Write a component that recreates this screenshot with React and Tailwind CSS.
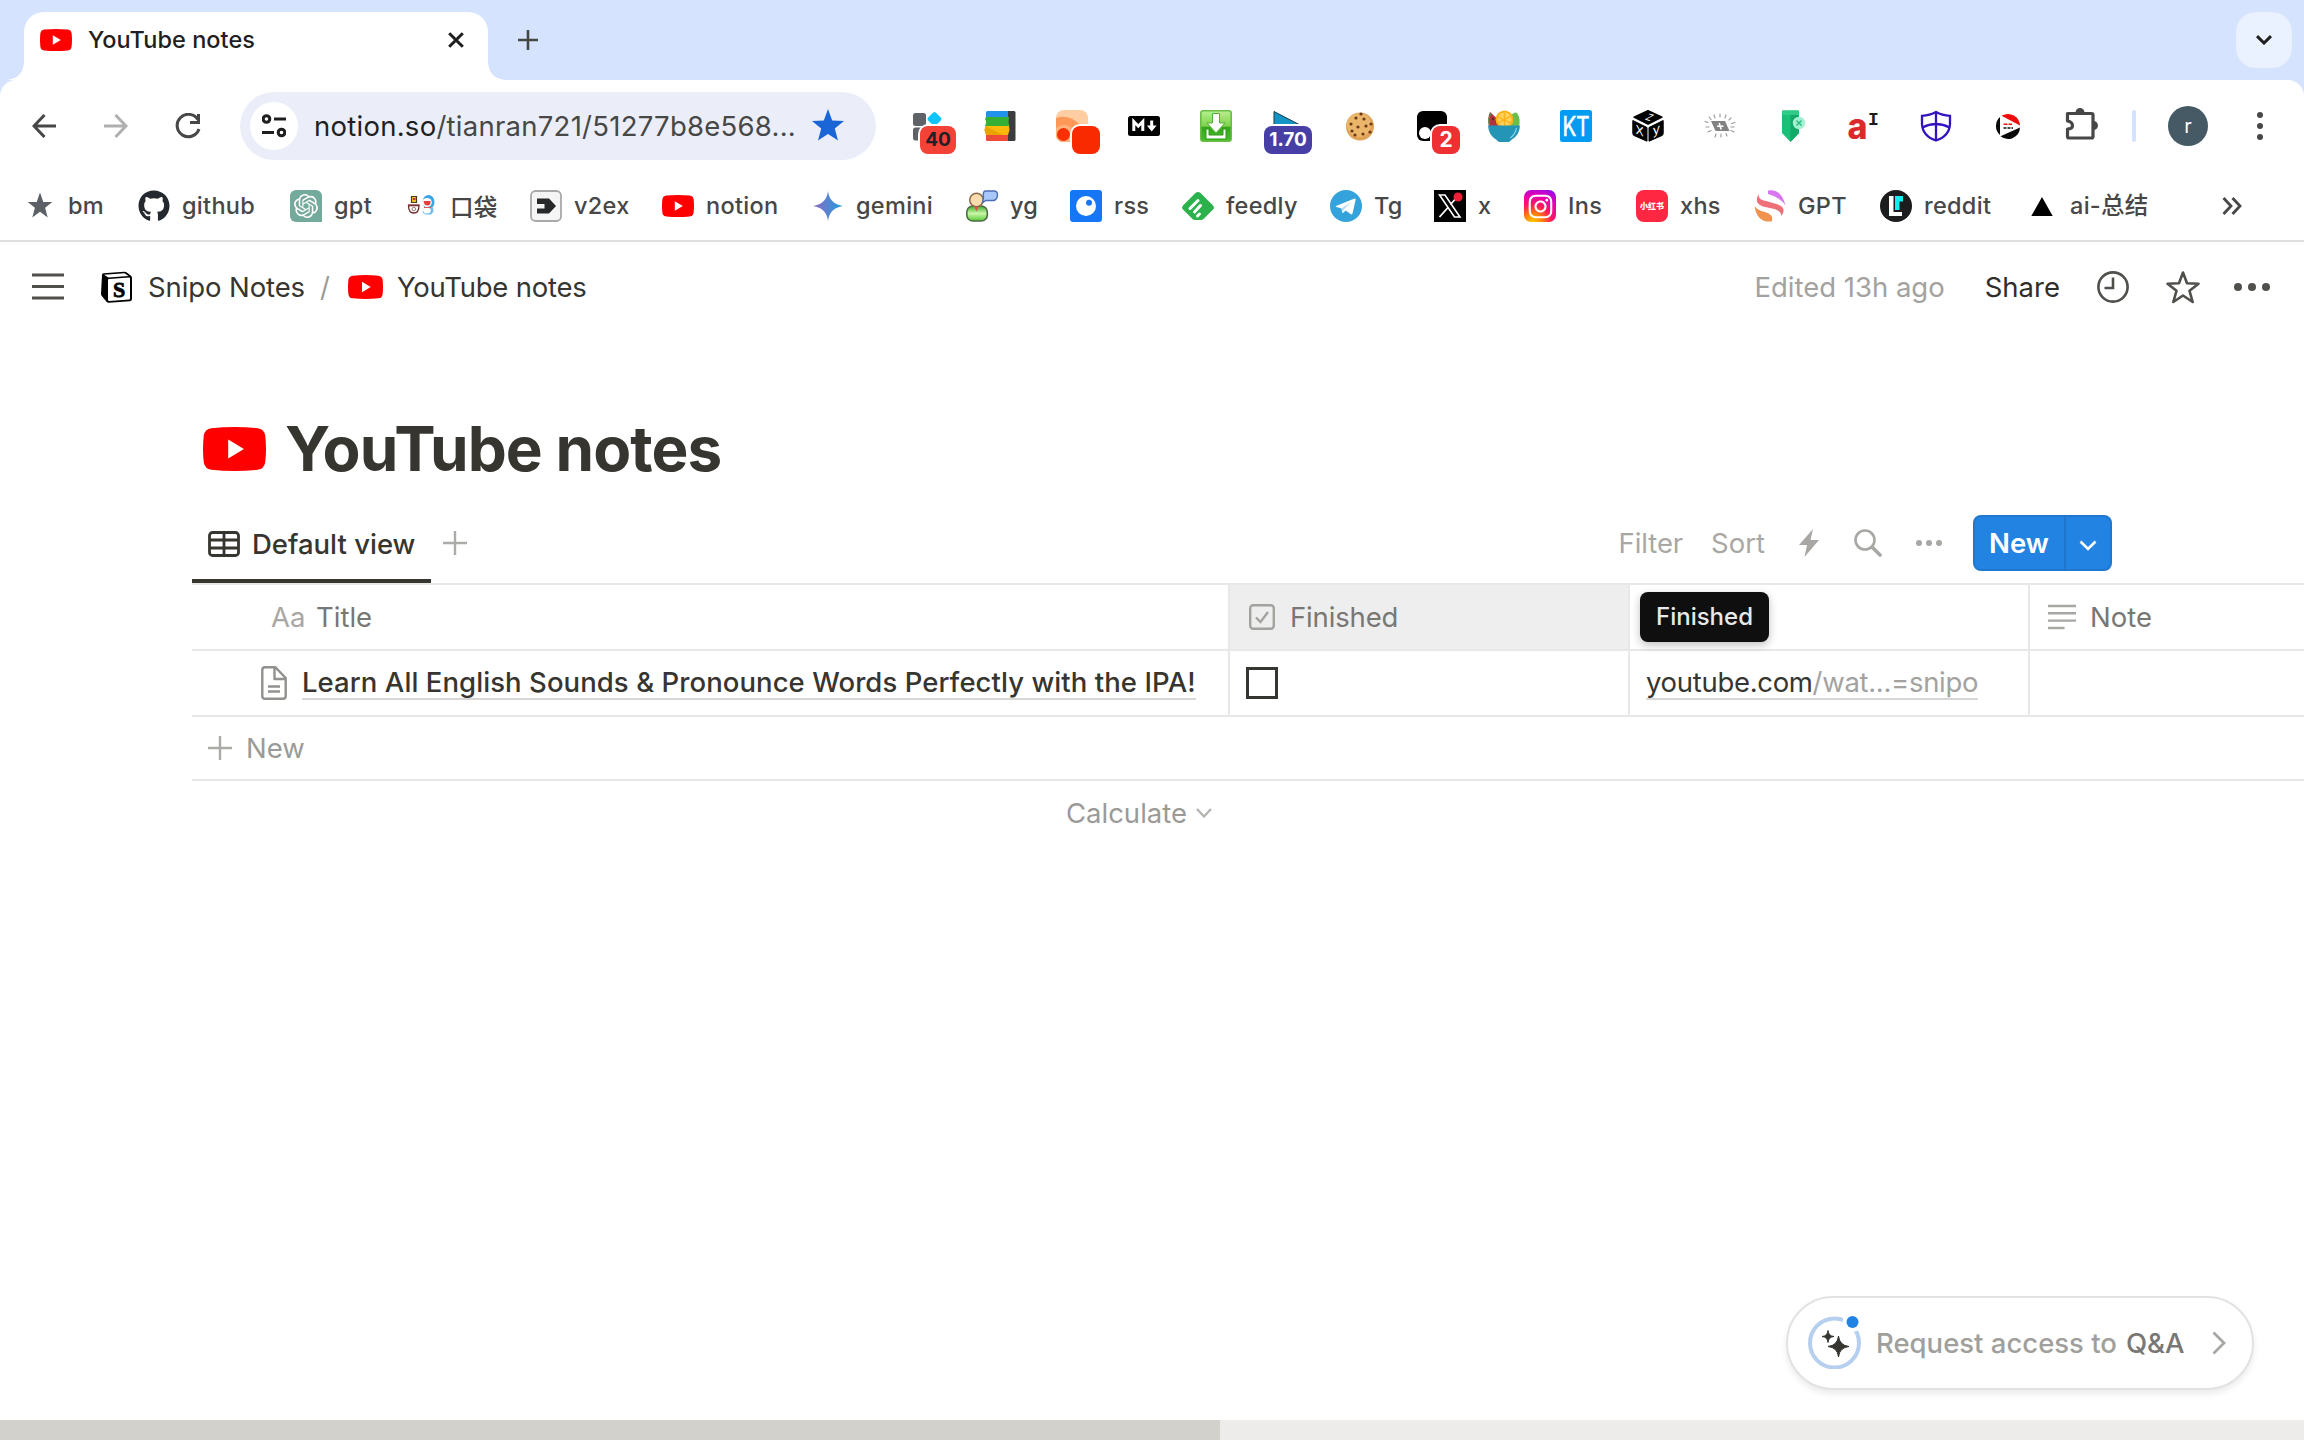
import { FaGithub, FaInstagram } from "react-icons/fa";
import { SiOpenai } from "react-icons/si";

function YouTubeIcon({ className }) {
  return (
    <svg viewBox="0 0 32 22" className={className} preserveAspectRatio="none">
      <path d="M4.200 .6Q16-.6 27.800.6Q31 1 31.600 4.200Q32.400 11 31.600 17.800Q31 21 27.800 21.400Q16 22.600 4.200 21.400Q1 21 .4 17.800Q-.4 11 .4 4.200Q1 1 4.200 .6Z" fill="#f00" />
      <path d="M12.800 6.300V15.700L20.800 11Z" fill="#fff" />
    </svg>
  );
}

/* Toolbar extensions */

function Badge({ className, children }) {
  return (
    <span className={`absolute top-4 flex h-[28px] items-center justify-center rounded-[8px] text-[19px] font-bold ring-2 ring-white ${className}`}>
      {children}
    </span>
  );
}

const S = ({ children, className = "size-8" }) => (
  <svg viewBox="0 0 32 32" className={`${className} shrink-0 overflow-visible`}>{children}</svg>
);

const extensions = [
  <>
    <S>
      <rect x="1" y="3" width="13" height="13" rx="2.500" fill="#5f6368" />
      <rect x="1" y="17.500" width="13" height="13" rx="2.500" fill="#5f6368" />
      <rect x="17" y="3.500" width="11" height="11" rx="2" transform="rotate(45 22.500 9)" fill="#0fc5fb" />
    </S>
    <Badge className="left-2 w-9 bg-[#f44236] text-[#202124]">40</Badge>
  </>,
  <S>
    <path d="M20 1h10q1.500 0 1.500 1.500v27q0 1.500-1.500 1.500H20z" fill="#3c3c3f" />
    <path d="M3 1H24V9H2V2Z" fill="#2093ec" />
    <path d="M2 7H25L24.500 12L25.500 16H1Q3 12 1 9Z" fill="#34b034" />
    <path d="M1.500 16H25L25.500 20L24 25H2L.5 20Z" fill="#fbb90c" />
    <path d="M1.500 16L19 25H2L.5 20Z" fill="#e9a300" />
    <path d="M2 25H24V31H3Q2 31 2 30Z" fill="#f04a38" />
  </S>,
  <>
    <S>
      <rect width="32" height="32" rx="8" fill="#fecda2" />
      <path d="M0 8Q12 4 22 13L28 19V28L14 32H8Q0 32 0 24Z" fill="#fe9858" />
      <path d="M0 18Q12 10 20 24L14 32H8Q0 32 0 24Z" fill="#ffb37e" />
      <circle cx="7.500" cy="24.500" r="6.500" fill="#fb3005" />
    </S>
    <Badge className="left-4 w-7 bg-[#f92a00]" />
  </>,
  <S>
    <rect y="6" width="32" height="20" rx="2.500" fill="#000" />
    <path d="M5.800 21V11.500L10.300 16.200L14.800 11.500V21" fill="none" stroke="#fff" strokeWidth="3" />
    <path d="M22.200 10.500h3v5h3.400L23.700 21.500L18.900 15.500h3.300z" fill="#fff" />
  </S>,
  <S>
    <defs><linearGradient id="dl" x2="0" y2="1"><stop stopColor="#b7ef90" /><stop offset=".5" stopColor="#7fd24b" /><stop offset=".55" stopColor="#35a51c" /><stop offset="1" stopColor="#49bd2e" /></linearGradient></defs>
    <rect x=".8" y=".8" width="30.400" height="30.400" rx="2.500" fill="url(#dl)" stroke="#6bbd4a" strokeWidth="1.600" />
    <path d="M12.500 3.500H19.500V13H25L16 23L7 13H12.500Z" fill="#fff" stroke="#55b136" />
    <path d="M6 19V29H26V19H23V25H9V19Z" fill="#fff" stroke="#2c9a16" />
  </S>,
  <>
    <S>
      <path d="M2 1.500L30 16L2 30Z" fill="#1494c4" stroke="#153c4c" />
    </S>
    <Badge className="-left-2 w-12 bg-[#473fa6] text-white">1.70</Badge>
  </>,
  <S>
    <circle cx="16" cy="16.500" r="14" fill="#e0a256" />
    <circle cx="15" cy="15" r="12" fill="#efbb72" opacity=".75" />
    {[[12, 8], [20, 9], [7, 14], [14, 17], [22, 16], [27, 14], [11, 25], [19, 24], [8, 21], [26, 22], [17, 4]].map(([x, y]) => (
      <circle key={`${x}-${y}`} cx={x} cy={y} r="1.600" fill="#6a3a1b" />
    ))}
  </S>,
  <>
    <S>
      <rect x="1" y="1" width="30" height="30" rx="6" fill="#000" />
      <circle cx="9" cy="23" r="6" fill="#fff" />
      <circle cx="21" cy="23" r="6" fill="#fff" />
    </S>
    <Badge className="left-4 w-7 bg-[#ee3033] text-[21px] text-white">2</Badge>
  </>,
  <S>
    <path d="M2 2L14 13L10 17H1Q-1 8 2 2Z" fill="#b33341" />
    <path d="M3.500 3Q-.5 8 1.500 15" fill="none" stroke="#4f9a4d" strokeWidth="1.200" />
    <circle cx="5" cy="9" r="1" fill="#5c1720" /><circle cx="8.500" cy="12" r="1" fill="#5c1720" />
    <path d="M22 6Q27 1 29 3Q33 9 31 16H22Z" fill="#6abf4b" />
    <circle cx="16.500" cy="9.500" r="9" fill="#fcb116" />
    <circle cx="16.500" cy="9.500" r="7" fill="#ffd15a" />
    <path d="M16.500 3V16M10 7L23 13M23 6L10 13" stroke="#fcb116" strokeWidth="1.300" />
    <path d="M0 15.500H32Q31.500 25 24 29.500L21 32H11L8 29.500Q.5 25 0 15.500Z" fill="#2495b7" />
    <path d="M28.500 18Q27 25 22 28" stroke="#7fd0e6" strokeWidth="1.200" fill="none" />
  </S>,
  <S>
    <rect width="32" height="32" rx="2.500" fill="#049bf2" />
    <text x="2.500" y="26" fontSize="27" fill="#fff" textLength="27" lengthAdjust="spacingAndGlyphs" fontFamily="Inter, sans-serif" stroke="#fff" strokeWidth=".6">KT</text>
  </S>,
  <S>
    <path d="M16 .8L30 7.200L16 14.200L2 7.200Z" fill="#000" stroke="#000" strokeWidth="1.500" strokeLinejoin="round" />
    <path d="M.8 10.500L15 17.500V31.200L2 25.500Q.8 25 .8 23.500Z" fill="#000" stroke="#000" strokeLinejoin="round" />
    <path d="M31.200 10.500L17 17.500V31.200L30 25.500Q31.200 25 31.200 23.500Z" fill="#000" stroke="#000" strokeLinejoin="round" />
    <g fill="#fff" fontFamily="Inter, sans-serif" textAnchor="middle">
      <text fontSize="9.500" transform="translate(15.500 10.200) rotate(15) skewX(-20)">Z</text>
      <text fontSize="12" transform="translate(7.500 25) skewY(22)">X</text>
      <text fontSize="13" transform="translate(24.500 24) skewY(-22)">y</text>
    </g>
  </S>,
  <S>
    <path d="M7 11H21L25.500 21H11.500Z" fill="#828282" />
    <path d="M13 16.200h6.500M15.200 13l2 6.500" stroke="#fff" strokeWidth="1.600" />
    <g stroke="#999" strokeWidth="1.100" strokeLinecap="round">
      <path d="M10 5L11 8M16 4V7M22 5L21 8M5 7L7 9.500M27 8L25 10M1 11.500L4 12.500M31 12.500L27.500 13.500M2 17H5M27 17H30M4 22L7 20.500M30 22L27 20.500M11 27L12 24M17 27V24M23 26L22 23.500" />
    </g>
  </S>,
  <S>
    <path d="M6 1.500Q6 .5 7 .5H22Q23 .5 23 1.500V23L14.500 32L6 23Z" fill="#1abf78" />
    <path d="M14.500 1H22Q23 .5 23 1.500V23L14.500 32Z" fill="#10a968" />
    <path d="M6 1.500Q6 .5 7 .5H22Q23 .5 23 1.500V5H6Z" fill="#2ecc87" />
    <circle cx="23" cy="13" r="6.200" fill="#a5efd1" />
    <path d="M20.500 10.500L25.500 15.500M25.500 10.500L20.500 15.500" stroke="#24b87b" strokeWidth="1.300" />
  </S>,
  <S>
    <text x="-.5" y="29" fontSize="36" fontWeight="800" fill="#da2a2b" fontFamily="Inter, sans-serif" textLength="20" lengthAdjust="spacingAndGlyphs">a</text>
    <text x="20" y="14.500" fontSize="18" fontWeight="700" fill="#1b1b1b" fontFamily="Liberation Mono, monospace">I</text>
  </S>,
  <S>
    <path d="M16 2Q10 5.500 2 5.800V14Q2.500 26 16 30.500Q29.500 26 30 14V5.800Q22 5.500 16 2Z" fill="none" stroke="#3412c0" strokeWidth="2.300" />
    <path d="M16 2V30M2.500 17.500Q9 14 16 14T29.500 17.500" fill="none" stroke="#3412c0" strokeWidth="2.300" />
  </S>,
  <S>
    <circle cx="16" cy="16" r="12" fill="#fff" />
    <path d="M10 5.500A12 12 0 0 1 28 15.500L10 6Z" fill="#ee0c0c" />
    <path d="M8 7A12 12 0 0 0 8 25ZM8.500 26.300L28 17.500A12 12 0 0 1 8.500 26.300Z" fill="#0a0a0a" />
    <path d="M11.500 14.200H20" stroke="#e11" strokeWidth="1.600" strokeDasharray="4 1" />
    <path d="M11.500 18H21" stroke="#111" strokeWidth="1.600" strokeDasharray="3 1" />
  </S>,
];

/* Bookmark icons */

const bookmarks = [
  { w: "w-[114px]", t: "bm", icon: <S><path d="M16 2.500L19.300 12H28.300L21.100 17.700L23.700 27.500L16 21.700L8.300 27.500L10.900 17.700L3.700 12H12.700Z" fill="#5b6066" /></S> },
  { w: "w-[152px]", t: "github", icon: <FaGithub className="size-8 shrink-0 text-[#24292f]" /> },
  { w: "w-[116px]", t: "gpt", icon: <span className="flex size-8 shrink-0 items-center justify-center rounded-[6px] rounded-br-none bg-[#74aa9c] text-white"><SiOpenai className="size-6" /></span> },
  {
    w: "w-[124px]", t: "口袋", cls: "font-['Noto_Sans_CJK_SC']",
    icon: (
      <S>
        <g transform="translate(1 0)">
          <path d="M4.500 6.500h5v6h-5z" fill="#f3c41c" stroke="#4a3a12" strokeWidth="1.200" /><path d="M6 8h2.500v2H6z" fill="#c33" />
          <path d="M1.500 15.500h10.500q0 7.500-5.200 7.500t-5.300-7.500z" fill="#fff" stroke="#6a2626" strokeWidth="1.300" /><path d="M1 15h11.500" stroke="#8c3b3b" strokeWidth="1.200" /><circle cx="6.800" cy="19" r="1.800" fill="none" stroke="#977" />
          <ellipse cx="21.500" cy="12" rx="6" ry="7" fill="#3aa6e6" /><ellipse cx="20" cy="12.500" rx="4.800" ry="4.500" fill="#fff" /><path d="M16.500 11h7q.5 4.500-3 4.500t-4-4.500z" fill="#e2413c" />
          <path d="M17.500 17.500h8.500l.5 4-2.500 3h-5.500l-3-2z" fill="#6cbdee" /><ellipse cx="20" cy="20.500" rx="3.800" ry="3" fill="#fff" /><path d="M17 17.500h7" stroke="#d55" />
        </g>
      </S>
    ),
  },
  { w: "w-[132px]", t: "v2ex", icon: <S><rect x="1" y="1" width="30" height="30" rx="4.500" fill="#f5f5f5" stroke="#a9a9a9" strokeWidth="1.800" /><path d="M7 8.500H19L26 16L19 23.500H7V18.500H14.500V14H7Z" fill="#26282a" /></S> },
  { w: "w-[150px]", t: "notion", icon: <YouTubeIcon className="h-[22px] w-8 shrink-0" /> },
  {
    w: "w-[154px]", t: "gemini",
    icon: <S><defs><linearGradient id="gem" x2="1"><stop stopColor="#9168c0" /><stop offset=".5" stopColor="#5684d1" /><stop offset="1" stopColor="#1ba1e3" /></linearGradient></defs><path d="M16 1Q17.500 14 31 16Q17.500 18 16 31Q14.500 18 1 16Q14.500 14 16 1Z" fill="url(#gem)" /></S>,
  },
  {
    w: "w-[104px]", t: "yg",
    icon: (
      <S>
        <defs><linearGradient id="yg" x2="0" y2="1"><stop stopColor="#3faa28" /><stop offset=".5" stopColor="#c9f7a8" /><stop offset="1" stopColor="#55c935" /></linearGradient></defs>
        <rect x=".8" y="16" width="20.500" height="15" rx="6" fill="url(#yg)" stroke="#4a6b46" strokeWidth="1.600" />
        <circle cx="10.500" cy="10" r="6.800" fill="#fbdcae" stroke="#8c6a45" strokeWidth="1.500" />
        <path d="M8.500 17h4l-2 4.500z" fill="#e2504a" />
        <path d="M19.500 1h8.500q3.500 0 3.500 4T28 10.500H20L16.500 12.500L17.500 8Q16.500 1 19.500 1z" fill="#a8c8fa" stroke="#4d6cb8" strokeWidth="1.400" />
      </S>
    ),
  },
  { w: "w-[112px]", t: "rss", icon: <S><rect width="32" height="32" rx="3" fill="#1677f6" /><circle cx="16" cy="16" r="10" fill="#fff" /><circle cx="19" cy="12.800" r="3" fill="#1677f6" /></S> },
  {
    w: "w-[148px]", t: "feedly",
    icon: <S><path d="M13.500 3Q16 .8 18.500 3L31 15.500Q32.800 17.500 31 19.500L22 28.500Q20.500 30 18.500 30H13.500Q11.500 30 10 28.500L1 19.500Q-.8 17.500 1 15.500Z" fill="#2bb24c" /><path d="M8 18.500L16 10.500M12.500 22L18.500 15.500M15.500 26L17.500 24" stroke="#fff" strokeWidth="3" strokeLinecap="round" /></S>,
  },
  { w: "w-[104px]", t: "Tg", icon: <S><circle cx="16" cy="16" r="16" fill="#34a3dc" /><path d="M6 16L24.500 8.500Q26 8 25.600 10L22.500 23.500Q22 25 20.500 24L15.700 20.500L13.300 22.800Q12.500 23.500 12.300 22.500L11.500 18.500L6.500 17Q5 16.500 6 16Z" fill="#fff" /><path d="M11.800 18.300L21.500 12L14 19.300L12.800 22Z" fill="#b5d8ee" /></S> },
  { w: "w-[90px]", t: "x", icon: <S><path d="M0 0H32V32H0Z" fill="#000" /><path d="M5.500 5H11L26 27H20.500Z" fill="none" stroke="#fff" strokeWidth="1.600" /><path d="M25 5L16.500 14.500M14 17.500L5.500 27" stroke="#fff" strokeWidth="1.800" /><circle cx="24" cy="7" r="4.500" fill="#ee1f37" /></S> },
  {
    w: "w-[112px]", t: "Ins",
    icon: <span className="flex size-8 shrink-0 items-center justify-center rounded-[7px] bg-[radial-gradient(circle_at_28%_105%,#ffd400_0%,#ff8a00_22%,#ff1a5c_46%,#e400b4_70%,#7a10ff_100%)] text-white"><FaInstagram className="size-[27px]" /></span>,
  },
  { w: "w-[118px]", t: "xhs", icon: <span className="flex size-8 shrink-0 items-center justify-center rounded-[8px] bg-[#ff2741] font-['Noto_Sans_CJK_SC'] text-[8px] font-black text-white">小红书</span> },
  {
    w: "w-[126px]", t: "GPT",
    icon: <S><path d="M14 .5Q27-2 31.500 15.500Q26 7 14 4Z" fill="#d877f0" /><path d="M5 3.500Q3 9 12 11L24 14.500Q33 18 27.500 26Q27 20 18 18.500L9 16.500Q-1 13 5 3.500Z" fill="#ee7079" /><path d="M.5 16Q3 20 11 22Q20 24.500 18 31.500Q3 33 .5 16Z" fill="#f09350" /></S>,
  },
  { w: "w-[146px]", t: "reddit", icon: <S><circle cx="16" cy="16" r="16" fill="#1c1c1e" /><path d="M9 6H13.500V22H22V26H9Z" fill="#fff" /><path d="M15 6H23V11.500H19.500V20H15Z" fill="#0ff0f0" /></S> },
  { w: "w-[196px]", t: "ai-总结", cls: "font-[Inter,'Noto_Sans_CJK_SC']", icon: <S><path d="M16 7L26.700 26H5.300Z" fill="#000" /></S> },
];

function TabStrip() {
  return (
    <div className="flex h-20 items-start bg-[#d5e3fe] pt-3">
      <svg viewBox="0 0 20 20" className="mt-12 ml-1 size-5"><path d="M0 20Q20 20 20 0V20Z" fill="#fff" /></svg>
      <div className="flex h-[68px] w-[464px] items-start rounded-t-[20px] bg-white pl-4">
        <YouTubeIcon className="mt-[17px] h-[22px] w-8" />
        <span className="mt-[10px] ml-[16px] w-[360px] text-[23.500px] leading-[36px] font-medium tracking-[0.05px] text-[#1f1f1f]">YouTube notes</span>
        <svg viewBox="0 0 16 16" className="mt-5 size-4"><path d="M1.200 1.200L14.800 14.800M14.800 1.200L1.200 14.800" stroke="#1f1f1f" strokeWidth="3" /></svg>
      </div>
      <svg viewBox="0 0 20 20" className="mt-12 size-5"><path d="M20 20Q0 20 0 0V20Z" fill="#fff" /></svg>
      <svg viewBox="0 0 20 20" className="mt-[18px] ml-[10px] size-5"><path d="M10 0V20M0 10H20" stroke="#474747" strokeWidth="2.600" /></svg>
      <div className="mr-3 ml-auto flex size-14 items-center justify-center rounded-[20px] bg-[#eaf1ff]">
        <svg viewBox="0 0 16 10" className="h-[10px] w-4"><path d="M1 1.200L8 8L15 1.200" fill="none" stroke="#1f1f1f" strokeWidth="3" /></svg>
      </div>
    </div>
  );
}

function Toolbar() {
  return (
    <div className="bg-[#d5e3fe]">
      <div className="flex h-[92px] items-center rounded-t-[16px] bg-white pl-8">
        <svg viewBox="0 0 24 24" className="size-6"><path d="M12.500 1L2 12L12.500 23M2 12H24" fill="none" stroke="#474747" strokeWidth="3" /></svg>
        <svg viewBox="0 0 24 24" className="ml-12 size-6"><path d="M11.500 1L22 12L11.500 23M22 12H0" fill="none" stroke="#b0b0b0" strokeWidth="3" /></svg>
        <svg viewBox="0 0 26 26" className="ml-[47px] size-[26px]"><path d="M22.800 6.500A11.200 11.200 0 1 0 24 16" fill="none" stroke="#474747" strokeWidth="3" /><path d="M23.500 1V9.500H15" fill="none" stroke="#474747" strokeWidth="3" /></svg>
        <div className="ml-[39px] flex h-[68px] w-[636px] items-center rounded-full bg-[#ebeef8] pl-[10px]">
          <div className="flex size-12 items-center justify-center rounded-full bg-white">
            <svg viewBox="0 0 24 24" className="size-6" fill="none" stroke="#1f1f1f" strokeWidth="3"><circle cx="4.500" cy="5" r="3.300" /><path d="M12 5H24M0 18.500H12" /><circle cx="19.500" cy="18.500" r="3.300" /></svg>
          </div>
          <span className="mt-[2px] ml-4 w-[498px] text-[27.500px] tracking-[0.26px] whitespace-nowrap text-[#474747]"><span className="text-[#1f1f1f]">notion.so</span><span>/tianran721/51277b8e568...</span></span>
          <svg viewBox="0 0 32 32" className="mt-[-2px] size-8"><path d="M16 0L20.200 11.500L32 12L22.800 19.500L26 31.500L16 25L6 31.500L9.200 19.500L0 12L11.800 11.500Z" fill="#1a66d6" /></svg>
        </div>
        <div className="ml-9 flex gap-10">
          {extensions.map((e, i) => <div key={i} className="relative size-8">{e}</div>)}
          <svg viewBox="0 0 34 34" className="mt-[-3px] size-[34px] overflow-visible" fill="none"><path d="M3.500 6.500H27.500Q29 6.500 29 8V29.500Q29 31 27.500 31H5Q3.500 31 3.500 29.500V22Q8.500 22 8.500 18.500T3.500 14Z" stroke="#474747" strokeWidth="3.200" strokeLinejoin="round" /><path d="M11.500 6V5.500a4.500 4.500 0 0 1 9 0V6zM29.500 14a4.500 4.500 0 0 1 0 9z" fill="#474747" /></svg>
        </div>
        <div className="ml-[34px] h-8 w-1 rounded-sm bg-[#d3e2fd]" />
        <div className="ml-8 flex size-10 items-center justify-center rounded-full bg-[#455a64] text-[20px] text-white">r</div>
        <svg viewBox="0 0 6 28" className="ml-[49px] h-7 w-[6px]" fill="#474747"><circle cx="3" cy="3" r="3" /><circle cx="3" cy="14" r="3" /><circle cx="3" cy="25" r="3" /></svg>
      </div>
    </div>
  );
}

function BookmarkBar() {
  return (
    <div className="flex h-[70px] items-start border-b-2 border-[#dfdfe0] pt-[18px] pl-6">
      {bookmarks.map((b) => (
        <div key={b.t} className={`flex h-8 shrink-0 items-center gap-3 ${b.w}`}>
          {b.icon}
          <span className={`text-[23.500px] leading-8 font-medium tracking-[0.3px] whitespace-nowrap text-[#474747] ${b.cls || ""}`}>{b.t}</span>
        </div>
      ))}
      <svg viewBox="0 0 20 18" className="mt-[7px] h-[18px] w-5"><path d="M1.500 1L9 9L1.500 17M10.500 1L18 9L10.500 17" fill="none" stroke="#474747" strokeWidth="2.800" /></svg>
    </div>
  );
}

function PageHeader() {
  return (
    <div className="flex h-[90px] items-center pl-8">
      <svg viewBox="0 0 32 28" className="size-8" stroke="#504f4b" strokeWidth="3"><path d="M0 2H32M0 13.500H32M0 25H32" /></svg>
      <svg viewBox="0 0 32 32" className="ml-9 size-8 overflow-visible">
        <path d="M2 4Q2 2.500 3.500 2.300L24 .8Q25.500.6 26.800 1.600L31 4.800Q32 5.500 32 7V28Q32 30 30 30.200L9 31.800Q7.500 32 6.500 30.800L1.800 25Q1 24 1 22.500Z" fill="#000" />
        <path d="M4 3.800L24.500 2.300L28.500 5L8.500 6.500Z" fill="#fff" />
        <path d="M8 8.800Q8 8 9 7.900L29 6.600Q30 6.600 30 7.500V27.600Q30 28.500 29 28.600L9.500 30Q8 30 8 28.800Z" fill="#fff" />
        <text x="19" y="26" textAnchor="middle" fontSize="22" fontWeight="700" fontFamily="Liberation Serif, serif" fill="#000" stroke="#000" strokeWidth=".8">S</text>
      </svg>
      <span className="mt-[2px] ml-4 text-[27.500px] tracking-[-0.1px] text-[#37352f]">Snipo Notes</span>
      <span className="mt-[2px] ml-[15px] text-[27.500px] text-[#9b9a97]">/</span>
      <YouTubeIcon className="ml-[18px] h-6 w-[35px]" />
      <span className="mt-[2px] ml-[14px] text-[27.500px] tracking-[-0.22px] text-[#37352f]">YouTube notes</span>
      <div className="mr-[34px] ml-auto flex items-center">
        <span className="mt-[2px] text-[27.500px] text-[#a3a29f]">Edited 13h ago</span>
        <span className="mt-[2px] ml-10 text-[27.500px] text-[#2f2e2b]">Share</span>
        <svg viewBox="0 0 32 32" className="ml-[37px] size-8" fill="none" stroke="#504f4b" strokeWidth="2.600"><circle cx="16" cy="16" r="14.600" /><path d="M16 6.500V17H7.500" /></svg>
        <svg viewBox="0 0 36 34" className="mt-[-1px] ml-9 h-[34px] w-9" fill="none" stroke="#504f4b" strokeWidth="2.600" strokeLinejoin="round"><path d="M18 2.500L22 13.300L33.500 13.700L24.500 20.800L27.700 32L18 25.500L8.300 32L11.500 20.800L2.500 13.700L14 13.300Z" /></svg>
        <svg viewBox="0 0 36 8" className="ml-[33px] h-2 w-9" fill="#504f4b"><circle cx="4" cy="4" r="4" /><circle cx="18" cy="4" r="4" /><circle cx="32" cy="4" r="4" /></svg>
      </div>
    </div>
  );
}

function Plus({ className }) {
  return <svg viewBox="0 0 24 24" className={className}><path d="M12 0V24M0 12H24" stroke="#acaba8" strokeWidth="2.400" /></svg>;
}

function ViewBar() {
  return (
    <div className="flex h-[82px] border-b-2 border-[#e8e8e7] text-[27.500px]">
      <div className="flex h-20 w-[239px] items-start border-b-4 border-[#37352f] pt-[28px] pl-4">
        <svg viewBox="0 0 32 26" className="h-[26px] w-8 shrink-0" fill="none" stroke="#37352f" strokeWidth="2.800"><rect x="1.500" y="1.500" width="29" height="23" rx="3" /><path d="M16 1V25M1 9H31M1 17H31" /></svg>
        <span className="mt-[-4px] ml-[12px] leading-[34px] font-medium whitespace-nowrap text-[#37352f]">Default view</span>
      </div>
      <Plus className="mt-[28px] ml-3 size-6" />
      <div className="mt-3 mr-[192px] ml-auto flex h-14 items-center text-[#a8a7a4]">
        <span className="mt-[2px] tracking-[-0.1px]">Filter</span>
        <span className="mt-[2px] ml-[28px]">Sort</span>
        <svg viewBox="0 0 20 28" className="ml-[34px] h-7 w-5"><path d="M14 0L0 16H8L5.500 28L20 11H11.500Z" fill="#a8a7a4" /></svg>
        <svg viewBox="0 0 28 28" className="ml-[35px] size-7" fill="none" stroke="#a8a7a4" strokeLinecap="round"><circle cx="11" cy="11" r="9.500" strokeWidth="2.600" /><path d="M18.500 18.500L26 26" strokeWidth="3.600" /></svg>
        <svg viewBox="0 0 26 6" className="ml-[34px] h-[6px] w-[26px]" fill="#a8a7a4"><circle cx="3" cy="3" r="3" /><circle cx="13" cy="3" r="3" /><circle cx="23" cy="3" r="3" /></svg>
        <div className="ml-[31px] flex h-14 w-[139px] items-center rounded-[8px] bg-[#2383e2] text-white shadow-[inset_0_0_0_2px_rgba(15,15,15,.1)]">
          <span className="mt-[1px] w-[91px] pl-4 font-semibold">New</span>
          <div className="flex h-14 flex-1 items-center border-l-2 border-[#1f76cb] pl-[13px]">
            <svg viewBox="0 0 18 11" className="mt-1 h-[11px] w-[18px]"><path d="M1.500 1.500L9 9L16.500 1.500" fill="none" stroke="#fff" strokeWidth="2.600" /></svg>
          </div>
        </div>
      </div>
    </div>
  );
}

function Table() {
  return (
    <div className="text-[27.500px] text-[#787774]">
      <div className="flex h-[66px] border-b-2 border-[#e8e8e7]">
        <div className="flex w-[1036px] items-center pl-[79px]">
          <span className="mt-[1px] w-[45px] text-[#a8a7a4]">Aa</span>
          <span className="mt-[1px]">Title</span>
        </div>
        <div className="flex w-[400px] items-center border-l-2 border-[#e8e8e7] bg-[#eeeeee] pl-[19px]">
          <svg viewBox="0 0 26 26" className="size-[26px]" fill="none" stroke="#a3a29f" strokeWidth="2.400"><rect x="1.200" y="1.200" width="23.600" height="23.600" rx="3" /><path d="M7 13.500L11.500 18L19 8" /></svg>
          <span className="mt-[1px] ml-[15px] tracking-[-0.15px]">Finished</span>
        </div>
        <div className="relative w-[400px] border-l-2 border-[#e8e8e7]">
          <div className="absolute top-[7px] left-[10px] flex h-[50px] w-[129px] items-center justify-center rounded-[8px] bg-[#0f0f0f] text-[24px] font-medium text-[#e8e8e8] shadow-[0_3px_8px_rgba(0,0,0,.25)]"><span>Finished</span></div>
        </div>
        <div className="flex flex-1 items-center border-l-2 border-[#e8e8e7] pl-[18px]">
          <svg viewBox="0 0 28 26" className="h-[26px] w-7" stroke="#a8a7a4" strokeWidth="2.400"><path d="M0 2H28M0 9.300H28M0 16.600H28M0 24H16.500" /></svg>
          <span className="mt-[1px] ml-[14px]">Note</span>
        </div>
      </div>
      <div className="flex h-[66px] border-b-2 border-[#e8e8e7]">
        <div className="flex w-[1036px] items-center pl-[69px]">
          <svg viewBox="0 0 26 34" className="h-[34px] w-[26px] shrink-0" fill="none" stroke="#91918e" strokeWidth="2.400" strokeLinejoin="round"><path d="M4 1.300H14.500L24.700 12V30Q24.700 32.700 22 32.700H4Q1.300 32.700 1.300 30V4Q1.300 1.300 4 1.300ZM13.500 2V13H24.500M7 20.500H19M7 25.500H19" /></svg>
          <span className="ml-[15px] h-[34px] border-b-2 border-[#d8d7d5] leading-[32px] font-medium tracking-[0.068px] whitespace-nowrap text-[#37352f]">Learn All English Sounds &amp; Pronounce Words Perfectly with the IPA!</span>
        </div>
        <div className="flex w-[400px] items-center border-l-2 border-[#e8e8e7] pl-4">
          <div className="size-8 border-[3px] border-[#37352f]" />
        </div>
        <div className="flex w-[400px] items-center border-l-2 border-[#e8e8e7] pl-4">
          <span className="h-[34px] border-b-2 border-[#d8d7d5] leading-[32px] tracking-[-0.31px] whitespace-nowrap text-[#a3a29f]"><span className="text-[#37352f]">youtube.com</span><span>/wat...=snipo</span></span>
        </div>
        <div className="flex-1 border-l-2 border-[#e8e8e7]" />
      </div>
      <div className="flex h-16 items-center border-b-2 border-[#e8e8e7] pl-4 text-[#9b9a97]">
        <Plus className="size-6" />
        <span className="mt-[1px] ml-[14px]">New</span>
      </div>
      <div className="flex h-16 w-[1036px] items-center justify-end pr-4 text-[#9b9a97]">
        <span className="mt-[2px]">Calculate</span>
        <svg viewBox="0 0 16 10" className="ml-[9px] h-[10px] w-4"><path d="M1 1L8 8.500L15 1" fill="none" stroke="#b3b2af" strokeWidth="2.200" /></svg>
      </div>
    </div>
  );
}

function QaButton() {
  return (
    <div className="absolute right-[50px] bottom-[50px] flex h-[94px] w-[468px] items-center rounded-full border-2 border-[#e2e2e1] bg-white pl-5 text-[27.500px] font-medium text-[#a09f9c] shadow-[0_4px_6px_rgba(15,15,15,.08)]">
      <svg viewBox="0 0 54 54" className="mt-[-2px] h-[54px] w-[54px]">
        <circle cx="26.500" cy="28" r="24.500" fill="none" stroke="#b7cfee" strokeWidth="4" />
        <circle cx="44.500" cy="7" r="10" fill="#fff" />
        <circle cx="44.500" cy="7" r="6" fill="#2383e2" />
        <path d="M30.500 21Q31.500 30.500 41 31.500Q31.500 32.500 30.500 42Q29.500 32.500 20 31.500Q29.500 30.500 30.500 21ZM20 15.500Q20.500 21 26 21.500Q20.500 22 20 27.500Q19.500 22 14 21.500Q19.500 21 20 15.500Z" fill="#37352f" stroke="#37352f" />
      </svg>
      <span className="mt-[1px] ml-[14px] whitespace-nowrap">Request access to</span>
      <span className="mt-[1px] ml-[9px] text-[#787774]">Q&amp;A</span>
      <svg viewBox="0 0 14 24" className="ml-[27px] h-6 w-[14px]"><path d="M1.500 1.500L12 12L1.500 22.500" fill="none" stroke="#a8a7a4" strokeWidth="2.800" /></svg>
    </div>
  );
}

export default function App() {
  return (
    <div className="relative h-[1440px] w-[2304px] overflow-hidden bg-white font-[Inter,sans-serif]">
      <TabStrip />
      <Toolbar />
      <BookmarkBar />
      <PageHeader />
      <main className="pl-48">
        <div className="flex h-[171px] items-center pl-[11px]">
          <YouTubeIcon className="mt-[62px] h-11 w-[63px]" />
          <h1 className="mt-[62px] ml-[19px] text-[62px] leading-[76px] font-bold tracking-[-0.95px] text-[#37352f]">YouTube notes</h1>
        </div>
        <ViewBar />
        <Table />
      </main>
      <QaButton />
      <div className="absolute inset-x-0 bottom-0 h-5 bg-[#edecea]"><div className="h-5 w-[1220px] bg-[#d3d1cb]" /></div>
    </div>
  );
}
